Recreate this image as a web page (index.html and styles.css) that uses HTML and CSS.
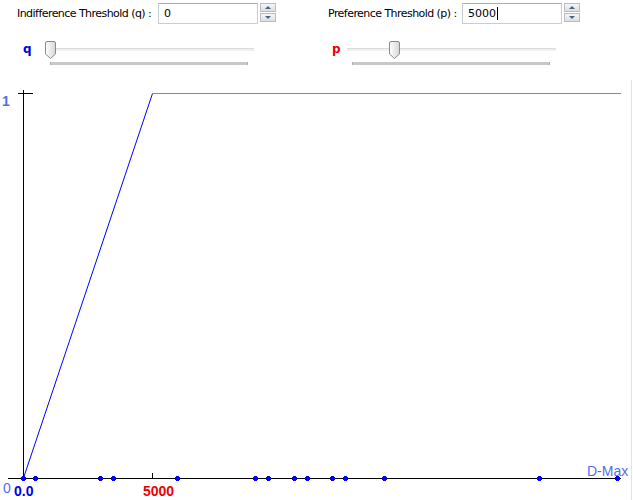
FILE: index.html
```html
<!DOCTYPE html>
<html>
<head>
<meta charset="utf-8">
<link rel="stylesheet" href="styles.css">
</head>
<body>
<div class="controls">
  <div class="group g1">
    <span class="label l1">Indifference Threshold (q) :</span>
    <div class="input">0</div>
    <div class="spin"><div class="btn"><span class="up"></span></div><div class="btn"><span class="down"></span></div></div>
  </div>
  <div class="group g2">
    <span class="label l2">Preference Threshold (p) :</span>
    <div class="input">5000<span class="caret"></span></div>
    <div class="spin"><div class="btn"><span class="up"></span></div><div class="btn"><span class="down"></span></div></div>
  </div>
</div>
<div class="sliders">
  <div class="sgroup s1">
    <span class="sym q">q</span>
    <div class="slider w1">
      <div class="track"></div>
      <svg class="thumb t1" width="11" height="18" viewBox="0 0 11 18"><defs><linearGradient id="tg" x1="0" x2="1"><stop offset="0" stop-color="#ffffff"/><stop offset="1" stop-color="#d6d6d6"/></linearGradient></defs><path d="M0.5 2 Q0.5 0.5 2 0.5 L9 0.5 Q10.5 0.5 10.5 2 L10.5 13 L5.5 17.5 L0.5 13 Z" fill="url(#tg)" stroke="#8a8a8a"/></svg>
      <div class="bar b1"></div>
    </div>
  </div>
  <div class="sgroup s2">
    <span class="sym p">p</span>
    <div class="slider w2">
      <div class="track"></div>
      <svg class="thumb t2" width="11" height="18" viewBox="0 0 11 18"><path d="M0.5 2 Q0.5 0.5 2 0.5 L9 0.5 Q10.5 0.5 10.5 2 L10.5 13 L5.5 17.5 L0.5 13 Z" fill="url(#tg)" stroke="#8a8a8a"/></svg>
      <div class="bar b2"></div>
    </div>
  </div>
</div>
<svg class="chart" width="633" height="420" viewBox="0 80 633 420">
  <line x1="631.5" y1="80" x2="631.5" y2="500" stroke="#e4e4e4"/>
  <line x1="23.5" y1="90" x2="23.5" y2="479" stroke="#000"/>
  <line x1="18" y1="93.5" x2="33" y2="93.5" stroke="#000"/>
  <line x1="8" y1="478.5" x2="621" y2="478.5" stroke="#000"/>
  <line x1="152.5" y1="473" x2="152.5" y2="479" stroke="#000"/>
  <line x1="23.5" y1="478" x2="152.5" y2="93.5" stroke="#0000ff"/>
  <line x1="152.5" y1="93.5" x2="621" y2="93.5" stroke="#11dd11"/>
  <g fill="#0000ff">
    <path d="M22 476h3v5h-3zM21 477h5v3h-5z"/>
    <path d="M34 476h3v5h-3zM33 477h5v3h-5z"/>
    <path d="M99 476h3v5h-3zM98 477h5v3h-5z"/>
    <path d="M112 476h3v5h-3zM111 477h5v3h-5z"/>
    <path d="M176 476h3v5h-3zM175 477h5v3h-5z"/>
    <path d="M254 476h3v5h-3zM253 477h5v3h-5z"/>
    <path d="M267 476h3v5h-3zM266 477h5v3h-5z"/>
    <path d="M293 476h3v5h-3zM292 477h5v3h-5z"/>
    <path d="M306 476h3v5h-3zM305 477h5v3h-5z"/>
    <path d="M331 476h3v5h-3zM330 477h5v3h-5z"/>
    <path d="M344 476h3v5h-3zM343 477h5v3h-5z"/>
    <path d="M383 476h3v5h-3zM382 477h5v3h-5z"/>
    <path d="M538 476h3v5h-3zM537 477h5v3h-5z"/>
    <path d="M616 476h3v5h-3zM615 477h5v3h-5z"/>
  </g>
  <text class="lbl light bold" x="2" y="106">1</text>
  <text class="lbl light" x="3" y="493">0</text>
  <text class="lbl blue" x="14" y="496">0.0</text>
  <text class="lbl red" x="143" y="496">5000</text>
  <text class="lbl light" x="587" y="476">D-Max</text>
</svg>
</body>
</html>
```
FILE: styles.css
```css
html, body { margin: 0; padding: 0; background: #fff; }
body { width: 633px; height: 500px; overflow: hidden; font-family: "DejaVu Sans", "Liberation Sans", sans-serif; font-size: 11px; color: #000; }
.controls { display: flex; height: 38px; padding-top: 3px; box-sizing: border-box; }
.group { display: flex; align-items: flex-start; }
.g1 { padding-left: 17px; }
.g2 { margin-left: 52px; }
.label { line-height: 21px; white-space: nowrap; letter-spacing: -0.55px; }
.l1 { width: 141px; }
.l2 { width: 134px; }
.input { width: 100px; height: 21px; box-sizing: border-box; border: 1px solid #c9ccd2; border-top-color: #abadb3; padding-left: 5px; line-height: 18px; display: flex; align-items: center; }
.caret { display: inline-block; width: 1px; height: 13px; background: #000; margin-left: 1px; }
.spin { margin-left: 2px; width: 16px; display: flex; flex-direction: column; gap: 1px; }
.btn { height: 9px; box-sizing: border-box; border: 1px solid #b8bcc4; background: linear-gradient(#f6f6f6, #dedede); display: flex; align-items: center; justify-content: center; }
.up { width: 0; height: 0; border-left: 3px solid transparent; border-right: 3px solid transparent; border-bottom: 3px solid #4d6185; }
.down { width: 0; height: 0; border-left: 3px solid transparent; border-right: 3px solid transparent; border-top: 3px solid #4d6185; }
.sliders { display: flex; height: 42px; padding-top: 3px; box-sizing: border-box; }
.sgroup { display: flex; align-items: flex-start; }
.s1 { padding-left: 23px; }
.s2 { margin-left: 78px; }
.sym { font-family: "DejaVu Sans", sans-serif; font-weight: bold; font-size: 12px; line-height: 16px; }
.q { color: #0000dd; width: 24px; }
.p { color: #ee0000; width: 15px; }
.slider { position: relative; height: 28px; }
.w1 { width: 207px; }
.w2 { width: 209px; }
.track { height: 2px; margin-top: 7px; border-top: 1px solid #dcdcdc; background: #f0f0f0; }
.bar { height: 3px; background: #c8c8c8; margin-top: 11px; border-left: 1px solid #b0b0b0; border-right: 1px solid #b0b0b0; }
.b1 { margin-left: 3px; width: 196px; }
.b2 { margin-left: 5px; width: 196px; }
.thumb { position: absolute; top: 0; }
.t1 { left: -2px; }
.t2 { left: 42px; }
.chart { display: block; }
.lbl { font-family: "Liberation Sans", sans-serif; font-weight: bold; font-size: 14px; }
.light { fill: #4f6ff0; font-weight: normal; font-size: 14px; }
.light.bold { font-weight: bold; }
.blue { fill: #0000ee; }
.red { fill: #ee0000; }
```
